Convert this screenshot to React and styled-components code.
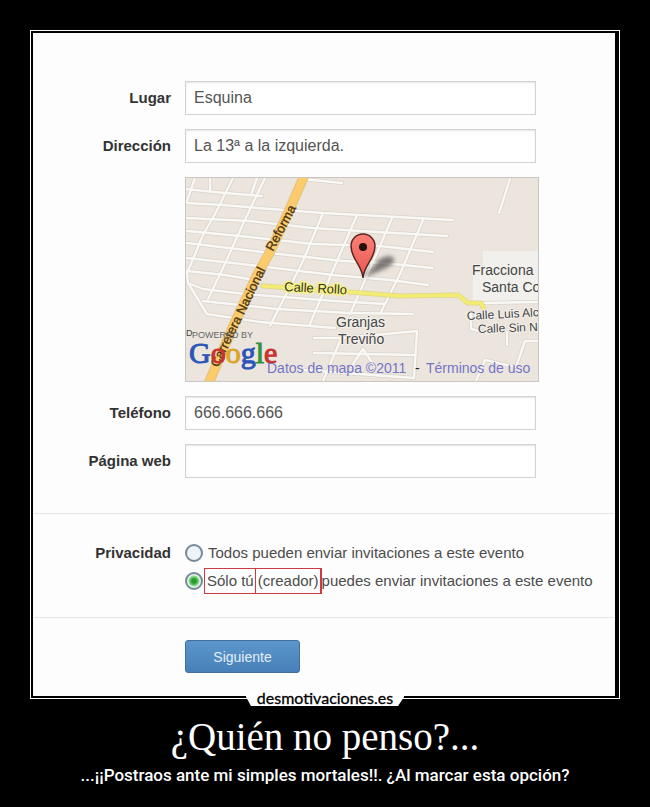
import styled, { createGlobalStyle } from "styled-components";

const streets = [
  "M0 12 L40 16 L77 19",
  "M2 26 L38 28 L73 31 L138 36 L268 43",
  "M2 41 L65 44 L128 51 L192 55 L262 59",
  "M2 54 L55 59 L128 67 L195 69 L248 75",
  "M2 66 L85 76 L158 84 L198 86 L248 91",
  "M2 81 L48 86 L148 98 L205 103 L243 108",
  "M2 94 L40 98 L75 104",
  "M3 106 L18 112 L60 117 L150 124 L200 127",
  "M18 124 L92 132 L165 136 L228 137",
  "M2 94 L3 106 L22 137 L75 145 L150 151",
  "M10 1 L2 24",
  "M25 1 V14",
  "M48 1 L30 37 L18 58 L3 94",
  "M80 1 L58 47 L38 91 L23 122",
  "M72 1 L66 18",
  "M138 36 L118 84 L85 149",
  "M172 38 L152 84 L124 149",
  "M207 41 L195 69 L165 137",
  "M238 43 L215 97 L195 137",
  "M118 2 L157 6",
  "M325 2 L314 36",
  "M129 161 H158 L232 154 L229 201",
  "M129 176 L180 177 L229 178",
  "M158 157 L138 204",
  "M178 172 L166 190 M178 172 L190 190",
  "M120 193 L229 201",
  "M354 164 H340 L331 190 L300 183 L291 204",
  "M299 126 L354 125",
  "M286 135 L286 152 L298 155",
  "M322 155 V168",
];

const fields = [
  { id: "lugar", label: "Lugar", value: "Esquina" },
  { id: "direccion", label: "Dirección", value: "La 13ª a la izquierda.", map: true },
  { id: "telefono", label: "Teléfono", value: "666.666.666" },
  { id: "web", label: "Página web", value: "" },
];

const EventMap = () => (
  <MapDrawing viewBox="0 0 354 205" role="img" aria-label="Mapa">
    <defs>
      <filter id="soften" x="-20%" y="-20%" width="140%" height="140%">
        <feGaussianBlur stdDeviation="2" />
      </filter>
      <linearGradient id="pin" x1="0" y1="0" x2="0" y2="1">
        <stop offset="0" stopColor="#fb8078" />
        <stop offset="1" stopColor="#e8584f" />
      </linearGradient>
    </defs>
    <rect width="354" height="205" fill="#ebe5de" />
    <path d="M298 74 H354 V125 H288 V90 H298 Z" fill="#f1f0ed" />
    <g fill="none" strokeLinejoin="round" strokeLinecap="round">
      {streets.map((d) => (
        <path key={d} d={d} stroke="#d9d4cc" strokeWidth="4" />
      ))}
      {streets.map((d) => (
        <path key={d} d={d} stroke="#faf8f5" strokeWidth="2.4" />
      ))}
      <path
        d="M78 109 L165 115 L215 119 L273 118 L283 126 L296 126 L299 132"
        stroke="#ddd58c"
        strokeWidth="5"
      />
      <path
        d="M78 109 L165 115 L215 119 L273 118 L283 126 L296 126 L299 132"
        stroke="#f4ec72"
        strokeWidth="3.6"
      />
      <path d="M120 -3 L103 36 L85 75 L72 98 L50 145 L22 210" stroke="#e6c07a" strokeWidth="10" />
      <path d="M120 -3 L103 36 L85 75 L72 98 L50 145 L22 210" stroke="#fbcb6c" strokeWidth="8" />
    </g>

    <g fill="#4a3510" stroke="#4a3510" strokeWidth="0.3" fontSize="13">
      <text transform="translate(33 191) rotate(-64)">Carretera Nacional</text>
      <text transform="translate(88 75) rotate(-62)">Reforma</text>
    </g>
    <text
      transform="translate(99 114) rotate(3)"
      fontSize="13"
      fill="#33331c"
      stroke="#f5f08a"
      strokeWidth="3"
      paintOrder="stroke"
    >
      Calle Rollo
    </text>
    <g fill="#454545" stroke="#f3f0eb" strokeWidth="2" paintOrder="stroke" fontSize="14">
      <text x="151" y="150">Granjas</text>
      <text x="153" y="167">Treviño</text>
      <text x="287" y="98">Fracciona</text>
      <text x="297" y="115">Santa Co</text>
      <text transform="translate(282 143) rotate(-3)" fontSize="12">Calle Luis Alc</text>
      <text transform="translate(293 156) rotate(-2)" fontSize="12">Calle Sin N</text>
    </g>

    <path d="M178 101 L190 88 C195 78 209 77 209 83 C209 90 193 94 178 101 Z" fill="#4d4a46" opacity="0.7" filter="url(#soften)" />
    <path
      d="M178 101 C177 88 166 82 166 69 A12 12 0 0 1 190 69 C190 82 179 88 178 101 Z"
      fill="url(#pin)"
      stroke="#5c2420"
      strokeWidth="1.5"
    />
    <circle cx="178" cy="70" r="4" fill="#24100e" />

    <text x="1" y="159" fontSize="9" fill="#444">D</text>
    <text x="7" y="161" fontSize="9" fill="#666">POWERED BY</text>
    <GoogleText x="4" y="186">
      <tspan fill="#2a56b8" stroke="#2a56b8">G</tspan>
      <tspan fill="#c8332e" stroke="#c8332e">o</tspan>
      <tspan fill="#dca62a" stroke="#dca62a">o</tspan>
      <tspan fill="#2a56b8" stroke="#2a56b8">g</tspan>
      <tspan fill="#33923c" stroke="#33923c">l</tspan>
      <tspan fill="#c8332e" stroke="#c8332e">e</tspan>
    </GoogleText>
    <g fill="#7575c6" fontSize="14">
      <text x="82" y="196">Datos de mapa ©2011</text>
      <text x="230" y="196" fill="#222">-</text>
      <a href="#terminos">
        <text x="241" y="196">Términos de uso</text>
      </a>
    </g>
    <rect x="0.5" y="0.5" width="353" height="204" fill="none" stroke="#c9c6c1" />
  </MapDrawing>
);

const App = () => (
  <Poster>
    <GlobalStyle />
    <Frame>
      <Form onSubmit={(e) => e.preventDefault()}>
        <Fields>
          {fields.map(({ id, label, value, map }) => (
            <Row key={id}>
              <Label htmlFor={id}>{label}</Label>
              <Control>
                <TextInput id={id} type="text" defaultValue={value} />
                {map && <EventMap />}
              </Control>
            </Row>
          ))}
        </Fields>
        <Privacy>
          <Row role="radiogroup" aria-labelledby="privacidad">
            <Label as="span" id="privacidad">Privacidad</Label>
            <div>
              <Option>
                <Radio type="radio" name="privacidad" value="todos" />
                <OptionText>Todos pueden enviar invitaciones a este evento</OptionText>
              </Option>
              <Option>
                <Radio type="radio" name="privacidad" value="creador" defaultChecked />
                <Mark>Sólo tú</Mark>
                <Mark $last>(creador)</Mark>
                <span>puedes enviar invitaciones a este evento</span>
              </Option>
            </div>
          </Row>
        </Privacy>
        <Actions>
          <Submit type="submit">Siguiente</Submit>
        </Actions>
      </Form>
      <Badge>desmotivaciones.es</Badge>
    </Frame>
    <Title>¿Quién no penso?...</Title>
    <Subtitle>...¡¡Postraos ante mi simples mortales!!. ¿Al marcar esta opción?</Subtitle>
  </Poster>
);

const GlobalStyle = createGlobalStyle`
  * {
    box-sizing: border-box;
  }

  body {
    margin: 0;
    background: #000;
  }
`;

const Poster = styled.main`
  min-height: 100vh;
  padding: 30px 30px 16px;
  background: #000;
  color: #fff;
  text-align: center;
`;

const Frame = styled.div`
  position: relative;
  padding: 2px 4px 2px 2px;
  border: 1px solid #fff;
`;

const Form = styled.form`
  background: #fdfdfd;
  color: #4c4c4c;
  font-family: "Liberation Sans", Arial, sans-serif;
  font-size: 15px;
  text-align: left;
`;

const Fields = styled.div`
  display: flex;
  flex-direction: column;
  gap: 14px;
  padding: 48px 0 35px;
`;

const Row = styled.div`
  display: grid;
  grid-template-columns: 138px minmax(0, 1fr);
  column-gap: 14px;
`;

const Label = styled.label`
  color: #333;
  font-weight: bold;
  line-height: 34px;
  text-align: right;
`;

const Control = styled.div`
  display: flex;
  flex-direction: column;
  gap: 14px;
  max-width: 354px;
`;

const TextInput = styled.input`
  width: calc(100% - 3px);
  height: 34px;
  padding: 0 8px;
  border: 1px solid #d2d2d2;
  background: #fff;
  box-shadow: inset 0 1px 2px #e4e4e4;
  color: #555;
  font-family: inherit;
  font-size: 16px;
`;

const MapDrawing = styled.svg`
  display: block;
  width: 100%;
  font-family: "Liberation Sans", Arial, sans-serif;
`;

const GoogleText = styled.text`
  font-family: "Liberation Serif", "Times New Roman", serif;
  font-size: 30px;
  stroke-width: 1px;
`;

const Privacy = styled.div`
  padding: 25px 0 22px;
  border-top: 1px solid #e6e6e6;
  border-bottom: 1px solid #e6e6e6;

  ${Label} {
    line-height: 28px;
  }
`;

const Option = styled.label`
  display: flex;
  align-items: center;
  min-height: 28px;
  line-height: 28px;
  white-space: nowrap;
`;

const OptionText = styled.span`
  padding-left: 4px;
`;

const Radio = styled.input`
  appearance: none;
  flex: none;
  width: 18px;
  height: 18px;
  margin: 0 1px 0 0;
  border: 2px solid #75899b;
  border-radius: 50%;
  background: #edf3f8;

  &:checked {
    background: radial-gradient(circle, #299a32 0 2px, #62c763 4px, #e6f3e6 6px);
  }
`;

const Mark = styled.span`
  height: 26px;
  padding: 0 1px 0 2px;
  border: 1px solid #cf3a40;
  border-right-width: ${({ $last }) => ($last ? "2px" : "0")};
  line-height: 24px;
`;

const Actions = styled.div`
  padding: 22px 0 23px 152px;
`;

const Submit = styled.button`
  display: block;
  width: 115px;
  height: 33px;
  border: 1px solid #416f9e;
  border-radius: 3px;
  background: linear-gradient(#5b96cb, #4780b8);
  color: #e4eef8;
  font-family: inherit;
  font-size: 14px;
`;

const Badge = styled.div`
  position: absolute;
  bottom: -8px;
  left: 50%;
  width: 158px;
  height: 14px;
  transform: translateX(-50%);
  background: #fff;
  clip-path: polygon(0 0, 100% 0, 100% 5px, 152px 100%, 5px 100%, 0 5px);
  color: #000;
  font-family: Lato, sans-serif;
  font-size: 16px;
  line-height: 12px;
  -webkit-text-stroke: 0.3px #000;
`;

const Title = styled.h1`
  margin: 16px 0 0;
  font-family: "Liberation Serif", "Times New Roman", serif;
  font-size: 39px;
  font-weight: normal;
  line-height: 44px;
`;

const Subtitle = styled.p`
  margin: 5px 0 0;
  font-family: Roboto, sans-serif;
  font-size: 17px;
  font-weight: 500;
  line-height: 22px;
`;

export default App;
